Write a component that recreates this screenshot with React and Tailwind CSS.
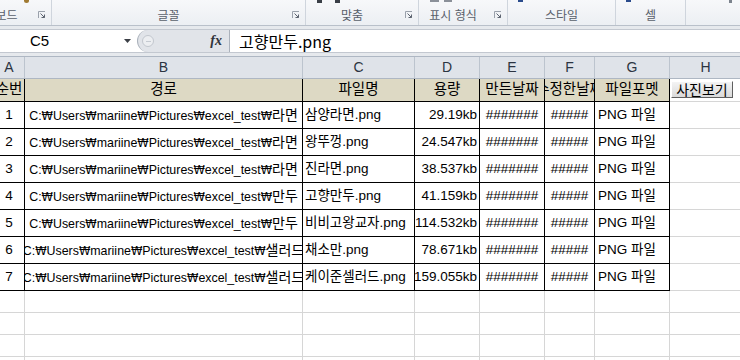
import React from "react";

const PARTS = ["C:", "Users", "mariine", "Pictures", "excel_test"];

const rows = [
  { no: "1", dir: "라면", file: "삼양라면.png", size: "29.19kb" },
  { no: "2", dir: "라면", file: "왕뚜껑.png", size: "24.547kb" },
  { no: "3", dir: "라면", file: "진라면.png", size: "38.537kb" },
  { no: "4", dir: "만두", file: "고향만두.png", size: "41.159kb" },
  { no: "5", dir: "만두", file: "비비고왕교자.png", size: "114.532kb" },
  { no: "6", dir: "샐러드", file: "채소만.png", size: "78.671kb" },
  { no: "7", dir: "샐러드", file: "케이준셀러드.png", size: "159.055kb" },
];

const CENTER = "flex items-center justify-center overflow-hidden whitespace-nowrap";
const LEFT = "flex items-center overflow-hidden whitespace-nowrap";
const RIGHT = "flex items-center justify-end overflow-hidden whitespace-nowrap";

function Path({ dir }) {
  return (
    <span className="text-[12.4px]">
      {PARTS.map((p) => (
        <React.Fragment key={p}>
          {p}
          <span className="font-['DejaVu_Sans',sans-serif] text-[11.5px]">₩</span>
        </React.Fragment>
      ))}
      <span className="text-[14px]">{dir}</span>
    </span>
  );
}

function Launcher() {
  return (
    <svg width="8" height="8" viewBox="0 0 8 8">
      <path d="M0.5 7V0.5H7" stroke="#9aa1ab" fill="none" />
      <path d="M2.5 2.5L6.5 6.5M6.5 3.5V6.5H3.5" stroke="#5d6470" fill="none" />
    </svg>
  );
}

function Group({ className, label, launcher }) {
  return (
    <div className={`h-full flex shrink-0 border-r border-[#cfd5dd] ${className}`}>
      <div className="flex-1 flex items-end justify-center">
        <span className="h-[18px] leading-[18px] text-[12px] text-[#59606b] whitespace-nowrap">
          {label}
        </span>
      </div>
      {launcher && (
        <div className="w-[20px] flex items-end pb-[6px] pl-[7px]">
          <Launcher />
        </div>
      )}
    </div>
  );
}

export default function App() {
  return (
    <div className="w-[740px] h-[360px] overflow-hidden bg-white font-['Liberation_Sans','Noto_Sans_CJK_KR',sans-serif]">
      {/* RIBBON (bottom strip) */}
      <div className="relative h-[26px] flex border-b border-[#b9c0ca] bg-gradient-to-b from-[#f7f8fa] to-[#eceff3]">
        <Group className="w-[92px] -ml-[40px]" label="클립보드" launcher />
        <Group className="w-[254px]" label="글꼴" launcher />
        <Group className="w-[113px]" label="맞춤" launcher />
        <Group className="w-[89px]" label="표시 형식" launcher />
        <Group className="w-[108px]" label="스타일" />
        <Group className="w-[70px]" label="셀" />
        <div className="flex-1" />

        {/* cut-off ribbon icons */}
        <span className="absolute left-[24px] top-0 w-[5px] h-[3px] bg-[#a07a32] rounded-b-sm" />
        <span className="absolute left-[317px] top-0 w-[5px] h-[3px] bg-[#3a3f47]" />
        <span className="absolute left-[335px] top-0 w-[5px] h-[3px] bg-[#3a3f47]" />
        <span className="absolute left-[430px] top-0 w-[9px] h-[2px] bg-[#8b9099]" />
        <span className="absolute left-[444px] top-0 w-[8px] h-[2px] bg-[#8b9099]" />
        <span className="absolute left-[518px] top-0 w-[5px] h-[2px] bg-[#2b4c8c]" />
        <span className="absolute left-[626px] top-0 w-[5px] h-[2px] bg-[#2b4c8c]" />
        <span className="absolute left-[729px] top-0 w-[3px] h-[3px] bg-[#7c838d]" />
      </div>

      {/* FORMULA BAR */}
      <div className="h-[3px] bg-[#e6e9ed]" />
      <div className="h-[24px] flex border-y border-[#c3c8d0] bg-white">
        <div className="w-[120px] shrink-0 flex items-center pl-[30px]">
          <span className="text-[15px] text-black">C5</span>
        </div>
        <div className="w-[17px] shrink-0 flex items-center">
          <svg width="7" height="4" viewBox="0 0 7 4" className="ml-[4px]">
            <path d="M0 0H7L3.5 4Z" fill="#3b3f46" />
          </svg>
        </div>
        <div className="w-[93px] shrink-0 flex items-center rounded-l-full border-l border-r border-[#aab1bb] bg-[#e1e4e9]">
          <div className="ml-[4px] w-[12px] h-[12px] rounded-full border border-[#c2c7ce] bg-[#eceef1] flex items-center justify-center">
            <span className="w-[5px] h-[1px] bg-[#c5cad1]" />
          </div>
          <div className="flex-1" />
          <span className="mr-[7px] font-['Liberation_Serif',serif] italic font-bold text-[14px] text-[#2f333a] leading-none">
            fx
          </span>
        </div>
        <div className="flex-1 flex items-center pl-[9px]">
          <span className="text-[16px] text-black leading-none font-['Noto_Sans_CJK_KR',sans-serif]">
            고향만두.png
          </span>
        </div>
      </div>
      <div className="h-[3px] bg-[#e6e9ed]" />

      {/* COLUMN HEADERS */}
      <div className="h-[23px] flex -ml-[6px] border-y border-[#aeb7c3] bg-[#dfe3e9] text-[14px] text-[#2b3441]">
        <div className={`w-[31px] shrink-0 border-r border-[#bcc4ce] ${CENTER}`}>A</div>
        <div className={`w-[278px] shrink-0 border-r border-[#bcc4ce] ${CENTER}`}>B</div>
        <div className={`w-[112px] shrink-0 border-r border-[#bcc4ce] ${CENTER}`}>C</div>
        <div className={`w-[65px] shrink-0 border-r border-[#bcc4ce] ${CENTER}`}>D</div>
        <div className={`w-[65px] shrink-0 border-r border-[#bcc4ce] ${CENTER}`}>E</div>
        <div className={`w-[50px] shrink-0 border-r border-[#bcc4ce] ${CENTER}`}>F</div>
        <div className={`w-[75px] shrink-0 border-r border-[#bcc4ce] ${CENTER}`}>G</div>
        <div className={`w-[72px] shrink-0 border-r border-[#bcc4ce] ${CENTER}`}>H</div>
        <div className="flex-1" />
      </div>

      {/* SHEET */}
      <div className="-ml-[6px] text-[13.5px] text-black">
        {/* header row */}
        <div className="h-[23px] flex text-[14.5px]">
          <div className={`w-[31px] shrink-0 border-r border-b border-black bg-[#ddd9c4] ${CENTER}`}>순번</div>
          <div className={`w-[278px] shrink-0 border-r border-b border-black bg-[#ddd9c4] ${CENTER}`}>경로</div>
          <div className={`w-[112px] shrink-0 border-r border-b border-black bg-[#ddd9c4] ${CENTER}`}>파일명</div>
          <div className={`w-[65px] shrink-0 border-r border-b border-black bg-[#ddd9c4] ${CENTER}`}>용량</div>
          <div className={`w-[65px] shrink-0 border-r border-b border-black bg-[#ddd9c4] ${CENTER}`}>만든날짜</div>
          <div className={`w-[50px] shrink-0 border-r border-b border-black bg-[#ddd9c4] ${CENTER}`}>수정한날짜</div>
          <div className={`w-[75px] shrink-0 border-r border-b border-black bg-[#ddd9c4] ${CENTER}`}>파일포멧</div>
          <div className="w-[72px] shrink-0 border-r border-b border-[#d6d6d6] flex items-start">
            <button className="ml-[1px] mt-[2px] w-[62px] h-[17px] flex items-center justify-center border border-t-white border-l-white border-b-[#5f5f5f] border-r-[#5f5f5f] bg-gradient-to-b from-[#f4f4f4] to-[#dadada] text-[14px] leading-none text-black">
              사진보기
            </button>
          </div>
          <div className="flex-1 border-b border-[#d6d6d6]" />
        </div>

        {/* data rows */}
        {rows.map((r) => (
          <div key={r.no} className="h-[27px] flex">
            <div className={`w-[31px] shrink-0 border-r border-b border-black ${CENTER}`}>{r.no}</div>
            <div className={`w-[278px] shrink-0 border-r border-b border-black ${CENTER}`}>
              <Path dir={r.dir} />
            </div>
            <div className={`w-[112px] shrink-0 border-r border-b border-black pl-[2px] ${LEFT}`}>{r.file}</div>
            <div className={`w-[65px] shrink-0 border-r border-b border-black pr-[2px] ${RIGHT}`}>{r.size}</div>
            <div className={`w-[65px] shrink-0 border-r border-b border-black ${CENTER}`}>#######</div>
            <div className={`w-[50px] shrink-0 border-r border-b border-black ${CENTER}`}>#####</div>
            <div className={`w-[75px] shrink-0 border-r border-b border-black pl-[3px] ${LEFT}`}>PNG 파일</div>
            <div className="w-[72px] shrink-0 border-r border-b border-[#d6d6d6]" />
            <div className="flex-1 border-b border-[#d6d6d6]" />
          </div>
        ))}

        {/* empty rows */}
        {[0, 1, 2, 3].map((i) => (
          <div key={i} className="h-[22px] flex">
            <div className="w-[31px] shrink-0 border-r border-b border-[#d6d6d6]" />
            <div className="w-[278px] shrink-0 border-r border-b border-[#d6d6d6]" />
            <div className="w-[112px] shrink-0 border-r border-b border-[#d6d6d6]" />
            <div className="w-[65px] shrink-0 border-r border-b border-[#d6d6d6]" />
            <div className="w-[65px] shrink-0 border-r border-b border-[#d6d6d6]" />
            <div className="w-[50px] shrink-0 border-r border-b border-[#d6d6d6]" />
            <div className="w-[75px] shrink-0 border-r border-b border-[#d6d6d6]" />
            <div className="w-[72px] shrink-0 border-r border-b border-[#d6d6d6]" />
            <div className="flex-1 border-b border-[#d6d6d6]" />
          </div>
        ))}
      </div>
    </div>
  );
}
